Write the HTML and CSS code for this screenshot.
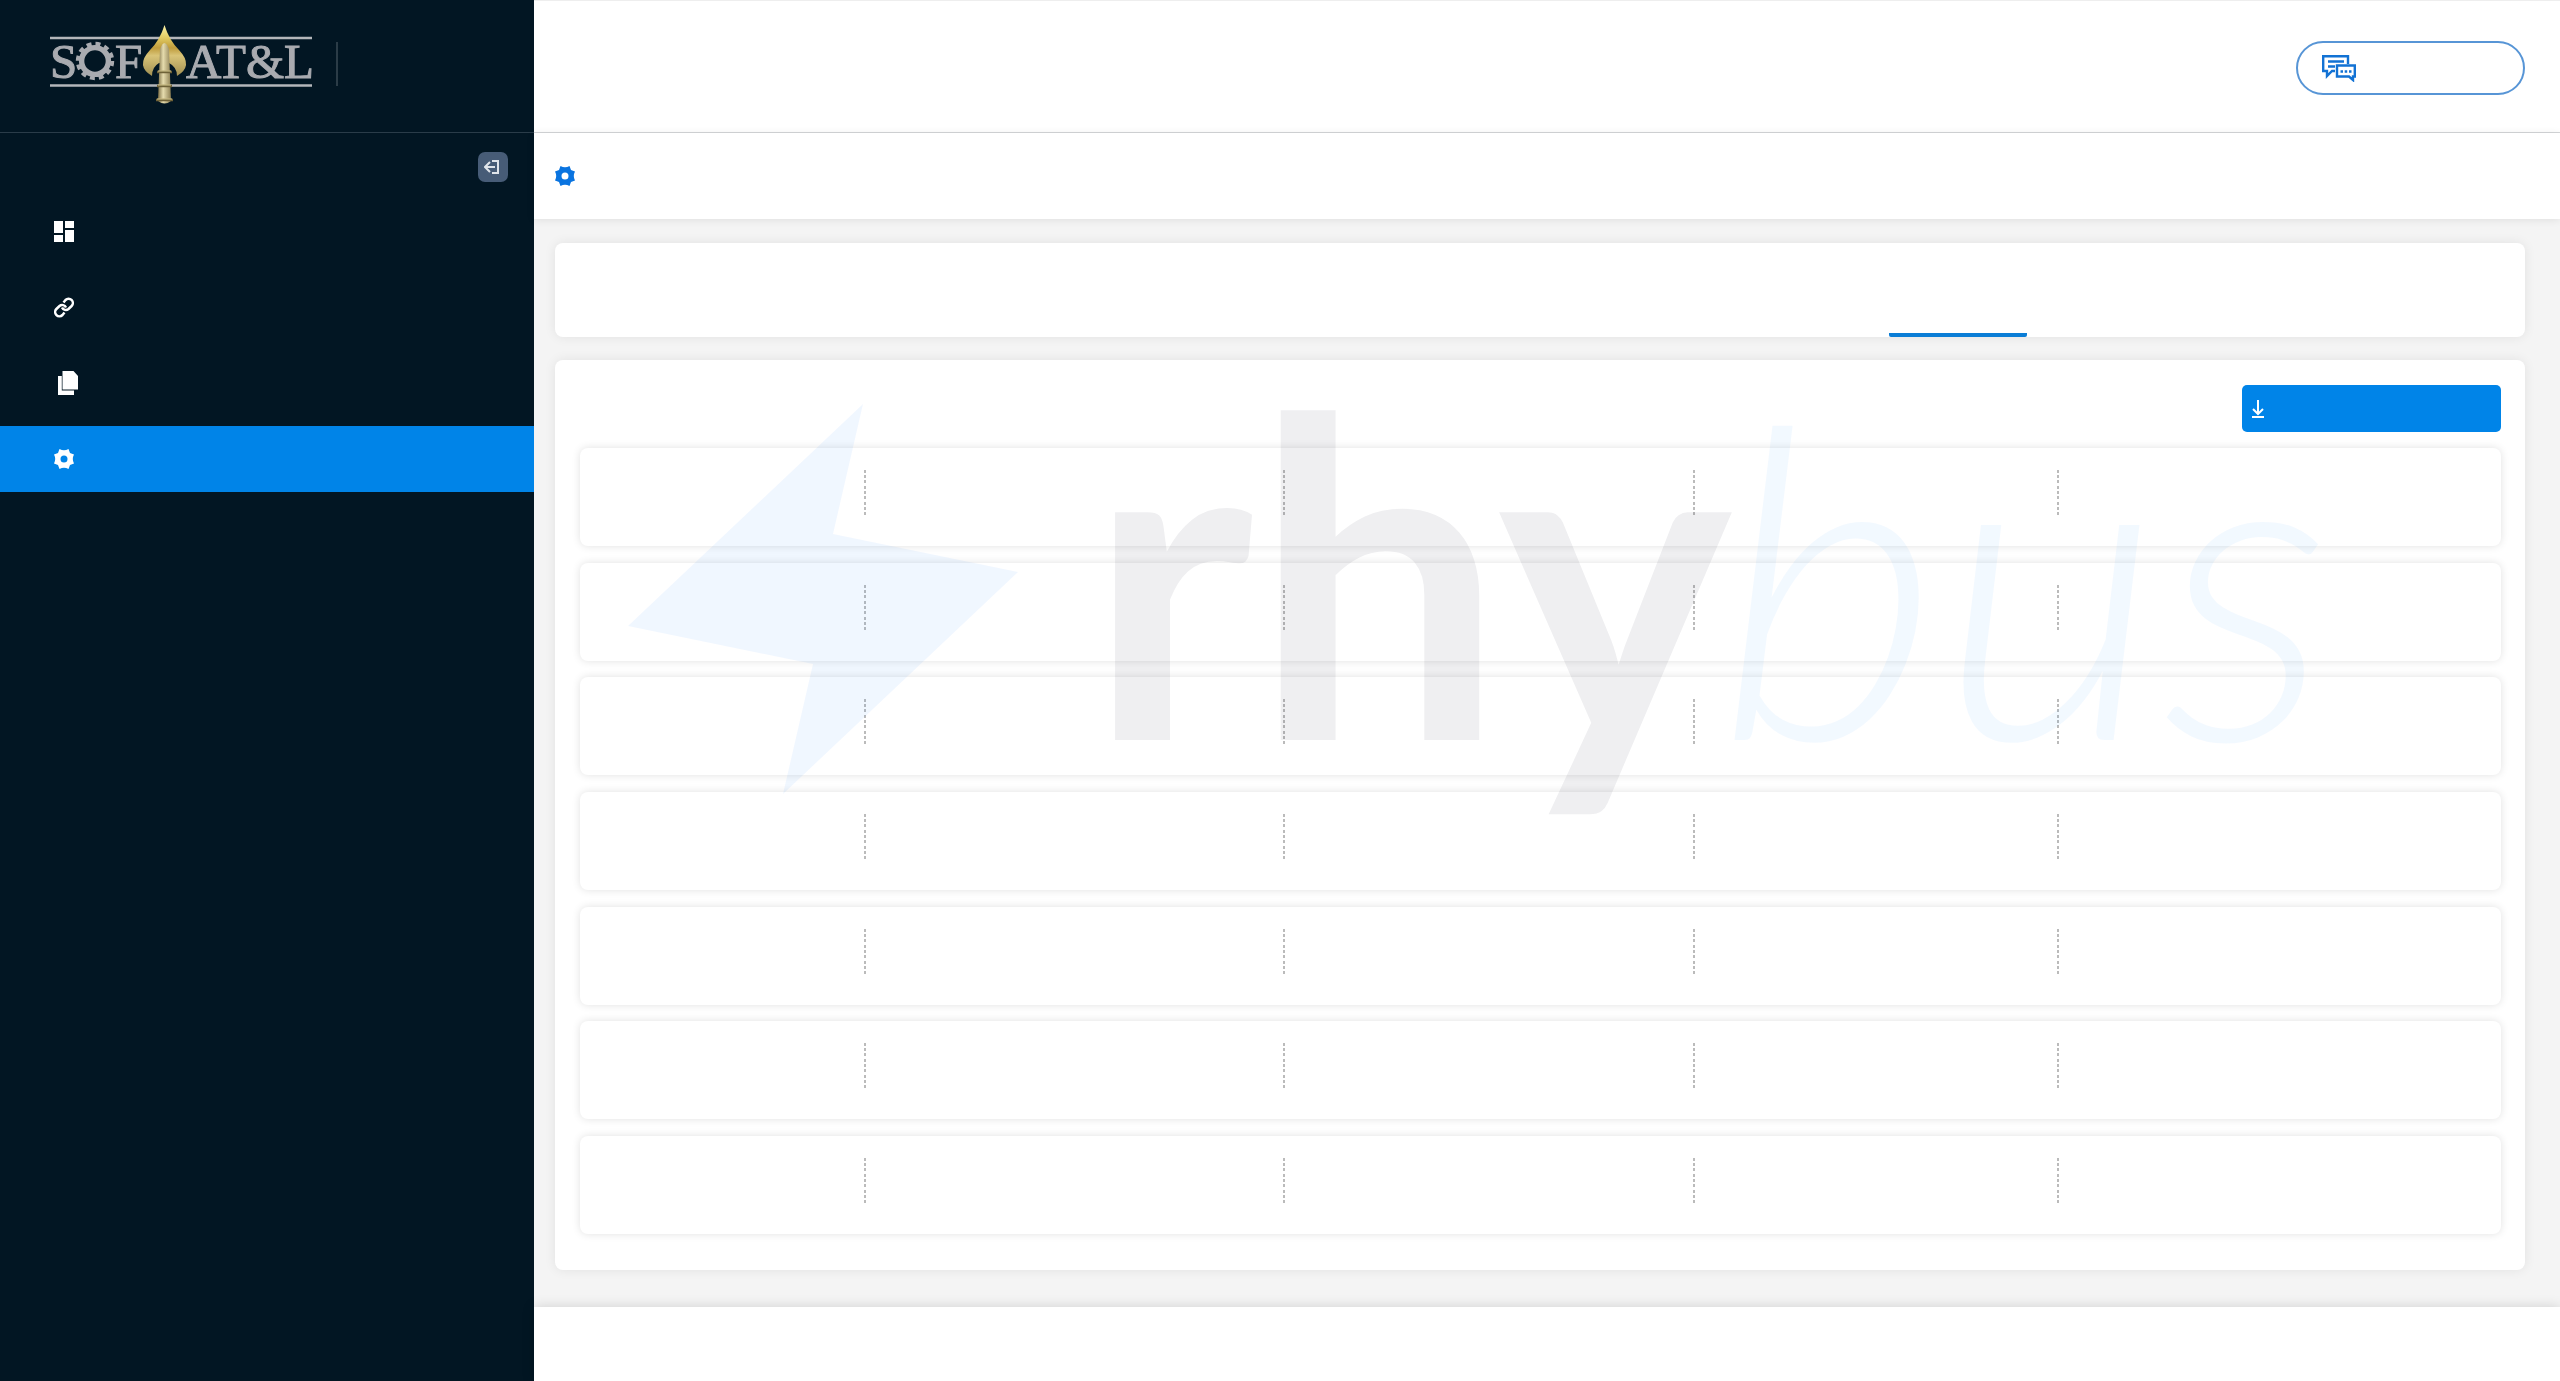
FILE: index.html
```
<!DOCTYPE html>
<html lang="en">
<head>
<meta charset="utf-8">
<title>rhybus</title>
<link rel="stylesheet" href="styles.css">
</head>
<body>
<svg class="sprite" aria-hidden="true">
  <symbol id="gear" viewBox="0 0 20 20"><path fill="currentColor" fill-rule="evenodd" d="M5.500 0 Q10 2.400 14.500 0 L16 4 L20 5.500 Q17.600 10 20 14.500 L16 16 L14.500 20 Q10 17.600 5.500 20 L4 16 L0 14.500 Q2.400 10 0 5.500 L4 4 Z M10 6.500 a3.500 3.500 0 1 0 0 7 a3.500 3.500 0 1 0 0 -7 Z"/></symbol>
</svg>
<div class="app">
  <aside class="sidebar">
    <div class="brand">
      <svg class="brand-logo" viewBox="0 0 296 84" role="img" aria-label="SOF AT&amp;L">
        <defs>
          <linearGradient id="gold" x1="0" y1="0" x2="0" y2="1">
            <stop offset="0" stop-color="#fbf3a8"/><stop offset=".25" stop-color="#e2cb62"/><stop offset=".45" stop-color="#bf9c3c"/><stop offset=".6" stop-color="#d9c478"/><stop offset="1" stop-color="#a08f52"/>
          </linearGradient>
          <linearGradient id="shaft" x1="0" y1="0" x2="1" y2="0">
            <stop offset="0" stop-color="#7d6f45"/><stop offset=".4" stop-color="#e6dcae"/><stop offset="1" stop-color="#8d7f52"/>
          </linearGradient>
        </defs>
        <path d="M0 13 H262 M0 60.500 H262" stroke="#b4b6ba" stroke-width="2.400"/>
        <g fill="#a9abb0" stroke="#a9abb0">
          <text class="brand-text" x="0" y="53">S</text>
          <text class="brand-text" x="65" y="53">F</text>
          <text class="brand-text" x="136" y="53">AT&amp;L</text>
        </g>
        <circle cx="45" cy="36" r="13.400" fill="none" stroke="#a9abb0" stroke-width="5.400"/>
        <circle cx="45" cy="36" r="17" fill="none" stroke="#a9abb0" stroke-width="4.400" stroke-dasharray="4.900 4"/>
        <path d="M114.500 0 Q119 15 129 25 Q144 41 127 51 Q127 42 119 38 H109 Q102 42 102 51 Q85 41 100 25 Q110 15 114.500 0 Z" fill="url(#gold)"/>
        <path d="M110 24 Q114.500 12 119 24 L121 76 Q114.500 81 108 76 Z" fill="url(#shaft)"/>
        <path d="M107 47 H122 M107 61 H122 M106 75 H123" stroke="#6f6238" stroke-width="2.400"/>
        <path d="M108 46 H121 M108 60 H121 M107 74 H122" stroke="#d6c98f" stroke-width="1"/>
        <path d="M287 17 V61" stroke="#3a4a55" stroke-width="1.500"/>
      </svg>
    </div>
    <div class="collapse-bar">
      <button class="collapse" type="button" aria-label="Collapse menu">
        <svg width="18" height="18" viewBox="0 0 18 18" fill="none" stroke="#dfe4ea" stroke-width="2"><path d="M8 3 H14 V15 H8 M11 9 H1 M6 4 L1 9 L6 14"/></svg>
      </button>
    </div>
    <nav class="menu" aria-label="Main">
      <a class="menu-item" href="#dashboard" aria-label="Dashboard"><svg width="20" height="21" viewBox="0 0 20 21" fill="#fff"><path d="M0 0H9V12H0Z M11 0H20V7H11Z M0 14H9V21H0Z M11 9H20V21H11Z"/></svg></a>
      <a class="menu-item" href="#links" aria-label="Links"><svg width="20" height="21" viewBox="0 0 20 21" fill="none" stroke="#fff" stroke-width="2.500"><path d="M9.500 5.500 L11.500 3 A4.200 4.200 0 0 1 17.600 9 L14.500 12 A4.200 4.200 0 0 1 8 10.500 M10.500 15.500 L8.500 18 A4.200 4.200 0 0 1 2.400 12 L5.500 9 A4.200 4.200 0 0 1 12 10.500"/></svg></a>
      <a class="menu-item" href="#documents" aria-label="Documents"><svg class="docs-icon" width="20" height="24" viewBox="0 0 20 24" fill="#fff"><path d="M4.500 0H15.500L20 5V18.500H4.500Z M0 5H3.800V19.500H16V24H0Z"/></svg></a>
      <a class="menu-item is-active" href="#settings" aria-label="Settings"><svg width="20" height="20"><use href="#gear"/></svg></a>
    </nav>
  </aside>

  <div class="page">
    <header class="topbar">
      <button class="chat" type="button" aria-label="Chat">
        <svg width="34" height="27" viewBox="0 0 34 27" fill="none" stroke="#1272d4" stroke-width="2.400"><path d="M26 9 V1.200 H1.200 V16 H5 V21 L10 16 H13 M6 6.500 H22 M6 11.500 H13"/><path d="M15 10.500 H32.800 V21.500 H31 V25 L27 21.500 H15 Z"/><path d="M18.500 16.500 H21 M22.700 16.500 H25.200 M27 16.500 H29.500"/></svg>
      </button>
    </header>
    <div class="titlebar"><svg class="title-icon" width="20" height="20" role="img" aria-label="Settings"><use href="#gear"/></svg></div>

    <main class="content">
      <nav class="tabs card" aria-label="Sections">
        <a class="tab is-active" href="#section" aria-current="page" aria-label="Current section"></a>
      </nav>
      <section class="panel card">
        <svg class="watermark" viewBox="0 0 1970 910" preserveAspectRatio="xMidYMin meet" role="img" aria-label="rhybus">
          <path class="wm-bolt" d="M308 44 L278 174 L463 212 L228 434 L258 304 L73 266 Z"/>
          <text class="wm-bold" x="533" y="380">rhy</text>
          <text class="wm-light" x="1162" y="380">bus</text>
        </svg>
        <div class="panel-actions">
          <button class="download" type="button" aria-label="Download">
            <svg width="12" height="18" viewBox="0 0 12 18" fill="none" stroke="#fff" stroke-width="2"><path d="M6 0 V14 M1 9 L6 14 L11 9"/><path d="M0 17 H12"/></svg>
          </button>
        </div>
        <ul class="rows">
          <li class="row"><div></div><div></div><div></div><div></div><div></div></li>
          <li class="row"><div></div><div></div><div></div><div></div><div></div></li>
          <li class="row"><div></div><div></div><div></div><div></div><div></div></li>
          <li class="row"><div></div><div></div><div></div><div></div><div></div></li>
          <li class="row"><div></div><div></div><div></div><div></div><div></div></li>
          <li class="row"><div></div><div></div><div></div><div></div><div></div></li>
          <li class="row"><div></div><div></div><div></div><div></div><div></div></li>
        </ul>
      </section>
    </main>
    <footer class="footer"></footer>
  </div>
</div>
</body>
</html>
```
FILE: styles.css
```
* { box-sizing: border-box; }
body { margin: 0; font-family: Lato, sans-serif; background: #f4f4f4; }
svg { display: block; }
.sprite { position: absolute; width: 0; height: 0; }
.app { display: flex; min-height: 100vh; }

.sidebar { flex: 0 0 534px; background: #021623; }
.brand { height: 133px; padding: 25px 50px; border-bottom: 1px solid #2a3c49; }
.brand-logo { width: 296px; height: 84px; }
.brand-text { font-family: "Liberation Serif", serif; font-size: 49px; }
.collapse-bar { display: flex; justify-content: flex-end; padding: 19px 26px 0; height: 65px; }
.collapse { display: grid; place-items: center; width: 30px; height: 30px; padding: 0; border: 0; border-radius: 7px; background: #475c77; }
.menu { display: grid; gap: 10px; }
.menu-item { display: flex; align-items: center; height: 66px; padding: 0 54px; }
.docs-icon { margin-left: 4px; }
.is-active.menu-item { background: #0084e8; color: #fff; }

.page { flex: 1; min-width: 0; display: flex; flex-direction: column; }
.topbar { display: flex; justify-content: flex-end; height: 133px; padding: 40px 35px 0; background: #fff; border-top: 1px solid #eee; border-bottom: 1px solid #d4d6d8; }
.chat { display: flex; align-items: center; width: 229px; height: 54px; padding: 0 24px; border: solid #5795d6; border-width: 2px; border-radius: 27px; background: #fff; }
.titlebar { display: flex; align-items: center; height: 86px; padding: 0 21px; background: #fff; box-shadow: 0 1px 8px rgba(0,0,0,.09); }
.title-icon { color: #0a74e0; }

.content { flex: 1; display: flex; flex-direction: column; gap: 23px; padding: 24px 35px 37px 21px; }
.card { background: #fff; border-radius: 8px; box-shadow: 0 0 12px rgba(0,0,0,.08); }
.tabs { display: grid; grid-template-columns: 1334fr 138fr 498fr; height: 94px; }
.tab { grid-column: 2; border-bottom: 4px solid #0a7dd6; border-radius: 2px; }
.panel { position: relative; flex: 1; display: flex; flex-direction: column; padding: 25px 24px 36px 25px; }
.watermark { position: absolute; inset: 0; width: 100%; height: 100%; overflow: visible; pointer-events: none; }
.wm-bolt { fill: rgba(0,115,255,.06); }
.wm-bold { font-family: Lato, sans-serif; font-size: 444px; font-weight: 700; fill: rgba(10,10,40,.065); }
.wm-light { font-family: Lato, sans-serif; font-size: 432px; font-weight: 300; font-style: italic; fill: rgba(0,132,255,.05); }
.panel-actions { display: flex; justify-content: flex-end; margin-bottom: 16px; }
.download { display: flex; align-items: center; width: 259px; height: 47px; padding: 0 10px; border: 0; border-radius: 5px; background: #0084e8; }
.rows { flex: 1; display: flex; flex-direction: column; justify-content: space-between; gap: 16px; margin: 0; padding: 0; list-style: none; }
.row { display: grid; grid-template-columns: 284fr 419fr 410fr 364fr 444fr; height: 98px; padding: 22px 0; border-radius: 8px; box-shadow: 0 0 8px rgba(0,0,0,.12); }
.row > div + div { height: 45px; background: repeating-linear-gradient(#bbb 0 3px, transparent 3px 5px, #bbb 5px 8px, transparent 8px 10px, #bbb 10px 13px, transparent 13px 16px) left top / 2px 45px no-repeat; }
.footer { height: 74px; background: #fff; box-shadow: 0 0 12px rgba(0,0,0,.15); }
```
